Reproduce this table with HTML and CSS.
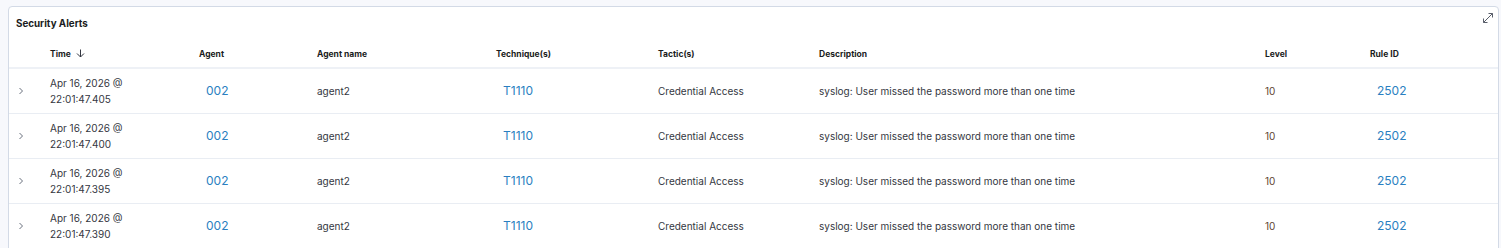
FILE: index.html
```html
<!DOCTYPE html>
<html lang="en">
<head>
  <meta charset="UTF-8" />
  <title>Security Alerts</title>
  <link rel="stylesheet" href="styles.css">
</head>
<body>

  <!-- alerts panel -->
  <div class="panel">
    <div class="panel-head">
      <h3>Security Alerts</h3>
      <button class="expand" title="Full screen">
        <svg width="12" height="12" viewBox="0 0 12 12" fill="none" stroke="#5a5f6b" stroke-width="1">
          <path d="M1.5 10.5 L10.5 1.5" />
          <path d="M6.5 1.5 H10.5 V5.5" />
          <path d="M1.5 6.5 V10.5 H5.5" />
        </svg>
      </button>
    </div>

    <table class="alerts">
      <colgroup>
        <col style="width:37px">
        <col style="width:149px">
        <col style="width:118px">
        <col style="width:179px">
        <col style="width:162px">
        <col style="width:161px">
        <col style="width:446px">
        <col style="width:105px">
        <col>
      </colgroup>
      <thead>
        <tr>
          <th></th>
          <th>Time <span class="sort">
            <svg width="9" height="9" viewBox="0 0 9 9" fill="none" stroke="#343741" stroke-width="1">
              <path d="M4.5 0.5 V8" />
              <path d="M1 4.5 L4.5 8 L8 4.5" />
            </svg></span></th>
          <th>Agent</th>
          <th>Agent name</th>
          <th>Technique(s)</th>
          <th>Tactic(s)</th>
          <th>Description</th>
          <th>Level</th>
          <th>Rule ID</th>
        </tr>
      </thead>
      <tbody id="rows"></tbody>
    </table>
  </div>

  <script>
    const rows = document.getElementById("rows");
    const times = ["22:01:47.405", "22:01:47.400", "22:01:47.395", "22:01:47.390"];

    times.forEach((t) => {
      const tr = document.createElement("tr");
      tr.innerHTML = `
        <td class="toggle"><svg width="8" height="8" viewBox="0 0 8 8" fill="none" stroke="#69707d" stroke-width="1"><path d="M2.5 1 L5.5 4 L2.5 7" /></svg></td>
        <td>Apr 16, 2026 @<br>${t}</td>
        <td><a class="link">002</a></td>
        <td>agent2</td>
        <td><a class="link">T1110</a></td>
        <td>Credential Access</td>
        <td>syslog: User missed the password more than one time</td>
        <td class="level">10</td>
        <td><a class="link">2502</a></td>`;
      rows.appendChild(tr);
    });
  </script>
</body>
</html>
```

FILE: styles.css
```css
body {
  margin: 0;
  padding: 6px 0 0 8px;
  background-color: #f7f8fc;
  font-family: "Inter", "Liberation Sans", sans-serif;
  color: #343741;
}

/* panel box */
.panel {
  background: #fff;
  border: 1px solid #d3dae6;
  border-radius: 4px;
  width: 1491px;
  height: 260px;
  box-sizing: border-box;
}

.panel-head {
  display: flex;
  justify-content: space-between;
  align-items: flex-start;
  height: 40px;
}

.panel-head h3 {
  margin: 11px 0 0 7px;
  font-size: 9.8px;
  font-weight: 700;
  color: #1a1c21;
}

.expand {
  background: none;
  border: none;
  padding: 0;
  margin: 5px 4px 0 0;
  width: 12px;
  height: 12px;
  cursor: pointer;
}

/* table */
.alerts {
  width: 100%;
  border-collapse: collapse;
  table-layout: fixed;
}

.alerts th {
  text-align: left;
  font-size: 8.5px;
  line-height: 12px;
  font-weight: 700;
  color: #1a1c21;
  height: 19px;
  padding: 1px 0 0 4px;
  vertical-align: top;
  border-bottom: 2px solid #eef1f6;
}

.sort {
  display: inline-block;
  margin-left: 3px;
  vertical-align: -1px;
}

.alerts td {
  font-size: 10px;
  line-height: 16px;
  height: 44px;
  padding: 0 0 0 4px;
  border-bottom: 1px solid #e9edf3;
  vertical-align: middle;
}

.alerts td.toggle {
  padding-left: 8px;
}

.alerts td.level {
  color: #5e4632;
}

.link {
  color: #2a7fc1;
  font-size: 12px;
  padding-left: 7px;
  cursor: pointer;
}
```
